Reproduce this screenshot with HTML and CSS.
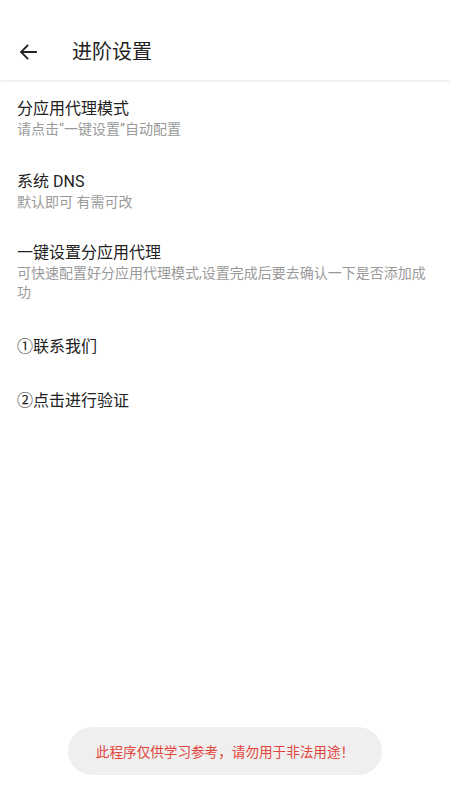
FILE: index.html
```html
<!DOCTYPE html>
<html lang="zh-CN">
<head>
<meta charset="utf-8">
<title>进阶设置</title>
<link rel="stylesheet" href="styles.css">
</head>
<body>
<div class="app">
  <header class="appbar">
    <div class="toolbar">
      <svg class="back" viewBox="0 0 24 24" width="24" height="24"><path d="M20 12H5.5M11.5 5.5L5 12l6.5 6.5" fill="none" stroke="#222" stroke-width="1.8" stroke-linecap="square"/></svg>
      <h1 class="title">进阶设置</h1>
    </div>
  </header>
  <main class="list">
    <div class="item">
      <div class="item-title">分应用代理模式</div>
      <div class="item-sub">请点击“一键设置”自动配置</div>
    </div>
    <div class="item">
      <div class="item-title">系统 DNS</div>
      <div class="item-sub">默认即可 有需可改</div>
    </div>
    <div class="item item-tight">
      <div class="item-title">一键设置分应用代理</div>
      <div class="item-sub">可快速配置好分应用代理模式,设置完成后要去确认一下是否添加成功</div>
    </div>
    <div class="item">
      <div class="item-title">①联系我们</div>
    </div>
    <div class="item">
      <div class="item-title">②点击进行验证</div>
    </div>
  </main>
  <div class="toast">此程序仅供学习参考，请勿用于非法用途！</div>
</div>
</body>
</html>
```
FILE: styles.css
```css
* { box-sizing: border-box; }
html, body { margin: 0; padding: 0; background: #fff; }
body {
  font-family: Roboto, "Noto Sans CJK SC", "Noto Sans", sans-serif;
  width: 450px;
  height: 800px;
  overflow: hidden;
}
.app {
  position: relative;
  width: 450px;
  height: 800px;
  display: flex;
  flex-direction: column;
}
.appbar {
  height: 80px;
  padding-top: 24px;
  background: #fff;
  box-shadow: 0 1px 3px rgba(0,0,0,0.10);
  position: relative;
  z-index: 1;
}
.toolbar {
  height: 56px;
  display: flex;
  align-items: center;
  padding-left: 16px;
}
.back { display: block; flex: none; }
.title {
  margin: 0 0 0 32px;
  font-size: 20px;
  font-weight: 400;
  color: #222;
  line-height: 28px;
}
.list {
  display: flex;
  flex-direction: column;
  padding-top: 2px;
}
.item {
  padding: 16px 17px;
}
.item-tight {
  padding-top: 14px;
  padding-bottom: 18px;
}
.item-title {
  font-size: 16px;
  line-height: 22px;
  color: #222;
}
.item-sub {
  font-size: 14px;
  line-height: 19px;
  color: #9a9a9a;
}
.toast {
  position: absolute;
  left: 68px;
  top: 727px;
  width: 314px;
  height: 48px;
  border-radius: 24px;
  background: #efefef;
  color: #e2453c;
  font-family: "Noto Sans CJK SC", sans-serif;
  font-size: 13.6px;
  display: flex;
  align-items: center;
  justify-content: center;
}
```
